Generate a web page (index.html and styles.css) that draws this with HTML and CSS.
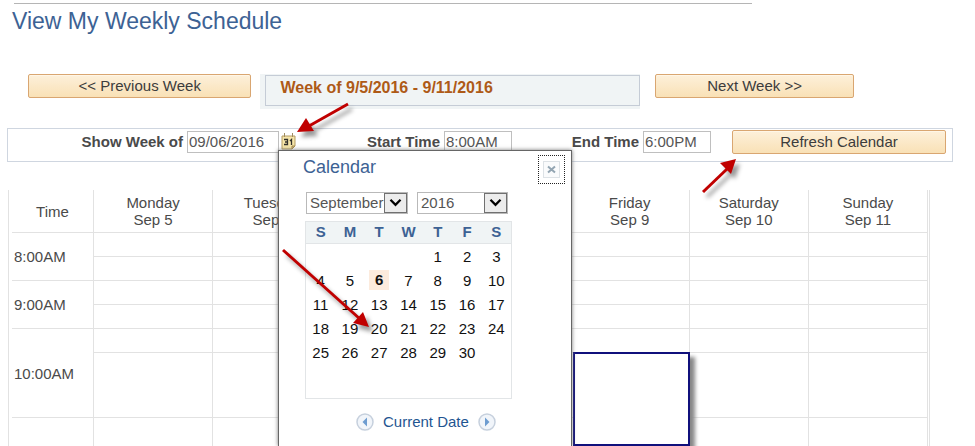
FILE: index.html
```html
<!DOCTYPE html>
<html lang="en">
<head>
  <meta charset="UTF-8" />
  <meta name="viewport" content="width=device-width, initial-scale=1.0"/>
  <title>View My Weekly Schedule</title>
  <link rel="stylesheet" href="styles.css">
</head>
<body>
  <div class="page">
    <hr class="top-rule">
    <h1 class="page-title">View My Weekly Schedule</h1>

    <div class="week-nav">
      <button type="button" class="btn btn-prev">&lt;&lt; Previous Week</button>
      <div class="week-banner"><h2 class="week-label">Week of 9/5/2016 - 9/11/2016</h2></div>
      <button type="button" class="btn btn-next">Next Week &gt;&gt;</button>
    </div>

    <form class="filter-bar">
      <div class="field">
        <label for="show-week">Show Week of</label>
        <input type="text" id="show-week" class="input-date" value="09/06/2016">
        <button type="button" class="icon-button" aria-label="Choose a date">
          <svg width="15" height="17" viewBox="0 0 15 17">
            <path d="M1 3h13v10l-3 3H1z" fill="#f6e5a8" stroke="#b39b62"/>
            <path d="M14 13h-3v3z" fill="#d9bf78" stroke="#a58b51"/>
            <path d="M3.500 0v4M11.500 0v4" stroke="#a08c60"/>
            <path d="M3 6.500h3.500v5H3M4 9h2.500M9 8l1.500-1.500v5.500" fill="none" stroke="#33312c" stroke-width="1.300"/>
          </svg>
        </button>
      </div>
      <div class="field">
        <label for="start-time">Start Time</label>
        <input type="text" id="start-time" class="input-time" value="8:00AM">
      </div>
      <div class="field">
        <label for="end-time">End Time</label>
        <input type="text" id="end-time" class="input-time" value="6:00PM">
      </div>
      <button type="button" class="btn btn-refresh">Refresh Calendar</button>
    </form>

    <div class="schedule">
      <table class="schedule-table">
        <thead>
          <tr>
            <th class="time-col">Time</th>
            <th>Monday<br>Sep 5</th>
            <th>Tuesday<br>Sep 6</th>
            <th></th>
            <th></th>
            <th>Friday<br>Sep 9</th>
            <th>Saturday<br>Sep 10</th>
            <th>Sunday<br>Sep 11</th>
          </tr>
        </thead>
        <tbody>
          <tr><td class="time" rowspan="2">8:00AM</td><td></td><td></td><td></td><td></td><td></td><td></td><td></td></tr>
          <tr><td></td><td></td><td></td><td></td><td></td><td></td><td></td></tr>
          <tr><td class="time" rowspan="2">9:00AM</td><td></td><td></td><td></td><td></td><td></td><td></td><td></td></tr>
          <tr><td></td><td></td><td></td><td></td><td></td><td></td><td></td></tr>
          <tr><td class="time" rowspan="2">10:00AM</td><td></td><td></td><td></td><td></td><td></td><td></td><td></td></tr>
          <tr class="tall"><td></td><td></td><td></td><td></td><td class="has-event"><div class="event"></div></td><td></td><td></td></tr>
          <tr class="tall"><td class="time"></td><td></td><td></td><td></td><td></td><td></td><td></td><td></td></tr>
        </tbody>
      </table>
    </div>

    <div class="calendar-popup">
      <div class="popup-header">
        <h2 class="popup-title">Calendar</h2>
        <button type="button" class="close-button" aria-label="Close">
          <svg width="17" height="17" viewBox="0 0 17 17">
            <rect x="0.500" y="0.500" width="16" height="16" fill="#fafbfc" stroke="#dde2e6"/>
            <path d="M5 5.500l7 6M12 5.500l-7 6" stroke="#93a5b2" stroke-width="2"/>
          </svg>
        </button>
      </div>
      <div class="popup-selects">
        <span class="select-wrap month">
          <select aria-label="Month"><option>September</option></select>
          <svg class="select-arrow" width="23" height="19" viewBox="0 0 23 19"><path d="M6 6l5.500 5.500L17 6" fill="none" stroke="#000" stroke-width="2.500"/></svg>
        </span>
        <span class="select-wrap year">
          <select aria-label="Year"><option>2016</option></select>
          <svg class="select-arrow" width="23" height="19" viewBox="0 0 23 19"><path d="M6 6l5.500 5.500L17 6" fill="none" stroke="#000" stroke-width="2.500"/></svg>
        </span>
      </div>
      <div class="month-box">
        <table class="month-table">
          <thead>
            <tr><th>S</th><th>M</th><th>T</th><th>W</th><th>T</th><th>F</th><th>S</th></tr>
          </thead>
          <tbody>
            <tr><td></td><td></td><td></td><td></td><td>1</td><td>2</td><td>3</td></tr>
            <tr><td>4</td><td>5</td><td><span class="today">6</span></td><td>7</td><td>8</td><td>9</td><td>10</td></tr>
            <tr><td>11</td><td>12</td><td>13</td><td>14</td><td>15</td><td>16</td><td>17</td></tr>
            <tr><td>18</td><td>19</td><td>20</td><td>21</td><td>22</td><td>23</td><td>24</td></tr>
            <tr><td>25</td><td>26</td><td>27</td><td>28</td><td>29</td><td>30</td><td></td></tr>
          </tbody>
        </table>
      </div>
      <div class="popup-footer">
        <button type="button" class="icon-button" aria-label="Previous month">
          <svg width="18" height="18" viewBox="0 0 18 18">
            <circle cx="9" cy="9" r="8" fill="#f1f5fa" stroke="#c6d0dd" stroke-width="1.500"/>
            <path d="M11 4.500v9L6.500 9z" fill="#6d9cd0"/>
          </svg>
        </button>
        <a class="current-date" href="#">Current Date</a>
        <button type="button" class="icon-button" aria-label="Next month">
          <svg width="18" height="18" viewBox="0 0 18 18">
            <circle cx="9" cy="9" r="8" fill="#f1f5fa" stroke="#c6d0dd" stroke-width="1.500"/>
            <path d="M7 4.500v9L11.500 9z" fill="#6d9cd0"/>
          </svg>
        </button>
      </div>
    </div>

    <!-- red pointer arrows -->
    <svg class="pointers" width="975" height="446" viewBox="0 0 975 446">
      <g stroke="#c00000" stroke-width="3">
        <path d="M348 104L309 126"/>
        <path d="M703 192L727 169"/>
        <path d="M283 250L360 319"/>
      </g>
      <g fill="#c00000">
        <path d="M297 132L306 118L314 131z"/>
        <path d="M736 159L731 174L720 163z"/>
        <path d="M369 327L353 323L363 312z"/>
      </g>
    </svg>
  </div>
</body>
</html>
```
FILE: styles.css
```css
html, body {
  margin: 0;
  padding: 0;
  height: 100%;
  font-family: "Liberation Sans", Arial, sans-serif;
  font-size: 15px;
  color: #4a4a4a;
  background: #fff;
  overflow: hidden;
}

* {
  box-sizing: border-box;
}

button, input, select {
  font-family: inherit;
  font-size: 15px;
  margin: 0;
}

.page {
  position: relative;
  height: 100%;
  padding: 3px 22px 0 7px;
  overflow: hidden;
}

.top-rule {
  width: 78%;
  height: 1px;
  margin: 0 0 0 7px;
  border: none;
  background: #b5b5b5;
}

.page-title {
  margin: 4px 0 0 5px;
  font-size: 23px;
  line-height: 26px;
  font-weight: normal;
  color: #3d6294;
}

/* week navigation */
.week-nav {
  display: flex;
  align-items: flex-start;
  margin: 40px 99px 0 21px;
}

.btn {
  height: 24px;
  padding: 0;
  border: 1px solid #d9a671;
  border-radius: 2px;
  background: linear-gradient(#fdf0da, #f9e1b6);
  box-shadow: inset 0 1px 0 #fff6e6;
  color: #3c3c3c;
  line-height: 20px;
  cursor: pointer;
}

.btn-prev {
  flex: 224 1 0;
}

.btn-next {
  flex: 199 1 0;
  margin-left: 15px;
}

.week-banner {
  flex: 379 1 0;
  margin-left: 9px;
  padding: 1px 0 3px 5px;
  background: #f0f4f5;
}

.week-label {
  margin: 0;
  padding: 0 0 5px 14px;
  border: 1px solid #c5ccd6;
  font-size: 16px;
  line-height: 24px;
  color: #ae5a17;
}

/* filter bar */
.filter-bar {
  display: grid;
  grid-template-columns: 288fr 216fr 199fr 241fr;
  height: 34px;
  margin-top: 19px;
  padding-top: 1px;
  border: 1px solid #cfd6e0;
}

.field {
  display: flex;
  justify-content: flex-end;
  align-items: flex-start;
  padding-top: 1px;
}

.field label {
  margin-right: 4px;
  font-weight: bold;
  line-height: 21px;
  white-space: nowrap;
}

.field input {
  height: 22px;
  padding: 0 1px 2px;
  border: 1px solid #bfbfbf;
  background: #fff;
  color: #555;
}

.input-date {
  width: 92px;
}

.input-time {
  width: 68px;
}

.icon-button {
  display: block;
  padding: 0;
  border: none;
  background: none;
  cursor: pointer;
}

.icon-button svg {
  display: block;
}

.field .icon-button {
  margin: 2px 0 0 2px;
}

.btn-refresh {
  margin: 0 6px 0 21px;
}

/* schedule grid */
.schedule {
  margin: 28px 23px 0 1px;
  padding: 0 1px 0 3px;
  border: solid #e2e2e2;
  border-width: 0 1px;
}

.schedule-table {
  width: 100%;
  table-layout: fixed;
  border-collapse: separate;
  border-spacing: 0;
}

.schedule-table th,
.schedule-table td {
  padding: 0;
  border: solid #e2e2e2;
  border-width: 0 1px 1px 0;
}

.schedule-table th {
  height: 43px;
  font-weight: normal;
  line-height: 17px;
}

.schedule-table .time-col {
  width: 82px;
}

.schedule-table td {
  height: 24px;
}

.schedule-table .tall td {
  height: 65px;
}

.schedule-table .time {
  padding-left: 2px;
}

.has-event {
  position: relative;
}

.event {
  position: absolute;
  top: -1px;
  right: -1px;
  left: 2px;
  height: 94px;
  border: 2px solid #10107c;
  background: #fff;
  box-shadow: 5px 5px 4px #888;
}

/* calendar popup */
.calendar-popup {
  position: absolute;
  top: 150px;
  bottom: 0;
  left: 278px;
  width: 294px;
  padding: 4px 6px 0 27px;
  border: 1px solid #666;
  border-bottom: none;
  background: #fff;
  box-shadow: 0 0 4px #777;
}

.popup-header {
  display: flex;
  justify-content: space-between;
}

.popup-title {
  margin: 0 0 0 -3px;
  font-size: 18px;
  line-height: 25px;
  font-weight: normal;
  color: #3d6294;
}

.close-button {
  width: 27px;
  height: 29px;
  padding: 0;
  border: 1px dotted #222;
  background: #fff;
}

.close-button svg {
  display: block;
  margin: 0 auto;
}

.popup-selects {
  display: flex;
  gap: 9px;
  margin-top: 8px;
}

.select-wrap {
  position: relative;
}

.select-wrap.month {
  width: 102px;
}

.select-wrap.year {
  width: 91px;
}

.select-wrap select {
  display: block;
  width: 100%;
  height: 22px;
  padding: 0 0 2px 3px;
  border: 1px solid #b9b9b9;
  border-radius: 0;
  background: #fff;
  color: #555;
  appearance: none;
}

.select-arrow {
  position: absolute;
  top: 1px;
  right: 1px;
  height: 20px;
  border: 1px solid #707070;
  background: #ececec;
  pointer-events: none;
}

.month-box {
  width: 207px;
  height: 178px;
  margin: 7px 0 0 -1px;
  border: 1px solid #e2e5e7;
}

.month-table {
  width: 100%;
  table-layout: fixed;
  border-collapse: separate;
  border-spacing: 0;
  text-align: center;
  color: #111;
}

.month-table th {
  height: 22px;
  padding: 0 0 2px;
  border-bottom: 1px solid #e2e5e7;
  background: #f0f4f5;
  color: #3d6294;
}

.month-table td {
  height: 24px;
  padding: 0;
}

.today {
  display: block;
  width: 20px;
  margin: 0 auto;
  background: #fcebdd;
  font-weight: bold;
  line-height: 20px;
}

.popup-footer {
  display: flex;
  align-items: center;
  gap: 9px;
  margin: 13px 0 0 50px;
}

.current-date {
  color: #1f5591;
  line-height: 20px;
  text-decoration: none;
}

.pointers {
  position: absolute;
  top: 0;
  left: 0;
  pointer-events: none;
  filter: drop-shadow(4px 5px 2px rgba(0, 0, 0, 0.4));
}
```
